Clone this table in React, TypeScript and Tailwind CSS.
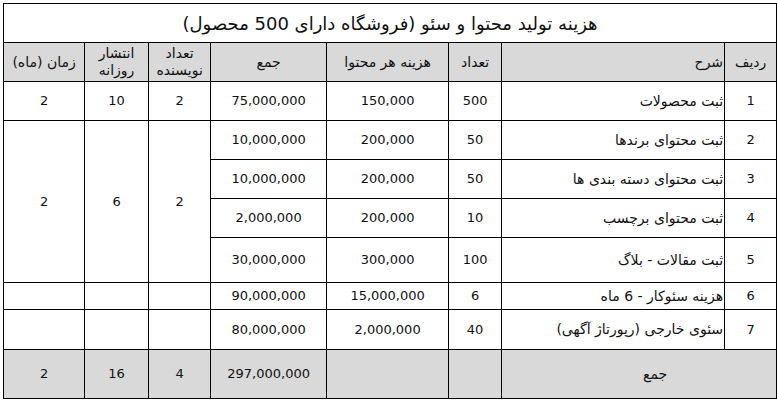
const rows = [
  { id: "1", title: "ثبت محصولات", count: "500", unit: "150,000", sum: "75,000,000" },
  { id: "2", title: "ثبت محتوای برندها", count: "50", unit: "200,000", sum: "10,000,000" },
  { id: "3", title: "ثبت محتوای دسته بندی ها", count: "50", unit: "200,000", sum: "10,000,000" },
  { id: "4", title: "ثبت محتوای برچسب", count: "10", unit: "200,000", sum: "2,000,000" },
  { id: "5", title: "ثبت مقالات - بلاگ", count: "100", unit: "300,000", sum: "30,000,000" },
  { id: "6", title: "هزینه سئوکار - 6 ماه", count: "6", unit: "15,000,000", sum: "90,000,000" },
  { id: "7", title: "سئوی خارجی (رپورتاژ آگهی)", count: "40", unit: "2,000,000", sum: "80,000,000" },
];

const heights = ["h-[39px]", "h-[39px]", "h-[39px]", "h-[39px]", "h-[39px]", "h-[45px]", "h-[27px]", "h-[40px]"];

const cell = "border border-black text-center align-middle p-0";
const fa = "text-[14px]";

export default function App() {
  return (
    <div
      className="w-[777px] h-[401px] bg-white pl-[3px] pt-[3px] text-[13px] text-[#111]"
      style={{ fontFamily: '"DejaVu Sans", Tahoma, sans-serif' }}
    >
      <table dir="rtl" className="table-fixed border-collapse w-[773px]">
        <colgroup>
          <col className="w-[52px]" />
          <col className="w-[223px]" />
          <col className="w-[53px]" />
          <col className="w-[122px]" />
          <col className="w-[116px]" />
          <col className="w-[62px]" />
          <col className="w-[64px]" />
          <col className="w-[81px]" />
        </colgroup>
        <tbody>
          <tr className="h-[39px]">
            <td colSpan={8} className={`${cell} text-[18px]`}>
              هزینه تولید محتوا و سئو (فروشگاه دارای 500 محصول)
            </td>
          </tr>
          <tr className={`h-[39px] bg-[#d9d9d9] ${fa}`}>
            <td className={cell}>ردیف</td>
            <td className={`${cell} text-right pr-[1px]`}>شرح</td>
            <td className={cell}>تعداد</td>
            <td className={cell}>هزینه هر محتوا</td>
            <td className={cell}>جمع</td>
            <td className={`${cell} leading-[17px]`}>
              تعداد
              <br />
              نویسنده
            </td>
            <td className={`${cell} leading-[17px]`}>
              انتشار
              <br />
              روزانه
            </td>
            <td className={cell}>زمان (ماه)</td>
          </tr>
          {rows.map((r, i) => (
            <tr key={r.id} className={heights[i + 1]}>
              <td className={cell}>{r.id}</td>
              <td className={`${cell} ${fa} text-right pr-[1px]`}>{r.title}</td>
              <td className={cell}>{r.count}</td>
              <td className={cell}>{r.unit}</td>
              <td className={cell}>{r.sum}</td>
              {i === 0 && (
                <>
                  <td className={cell}>2</td>
                  <td className={cell}>10</td>
                  <td className={cell}>2</td>
                </>
              )}
              {i === 1 && (
                <>
                  <td rowSpan={4} className={cell}>2</td>
                  <td rowSpan={4} className={cell}>6</td>
                  <td rowSpan={4} className={cell}>2</td>
                </>
              )}
              {i >= 5 && (
                <>
                  <td className={cell}></td>
                  <td className={cell}></td>
                  <td className={cell}></td>
                </>
              )}
            </tr>
          ))}
          <tr className="h-[49px] bg-[#d9d9d9]">
            <td colSpan={2} className={`${cell} ${fa} pl-[32px]`}>جمع</td>
            <td className={cell}></td>
            <td className={cell}></td>
            <td className={cell}>297,000,000</td>
            <td className={cell}>4</td>
            <td className={cell}>16</td>
            <td className={cell}>2</td>
          </tr>
        </tbody>
      </table>
    </div>
  );
}
